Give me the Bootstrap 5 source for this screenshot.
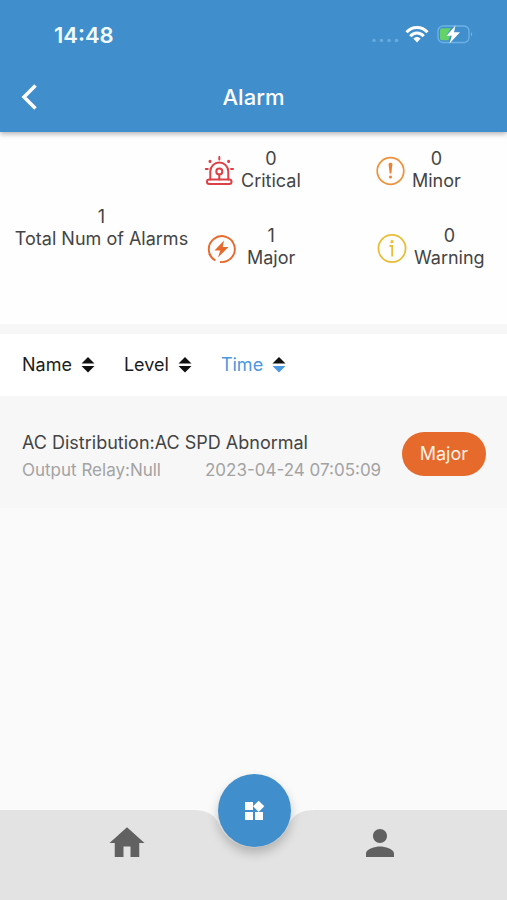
<!DOCTYPE html>
<html lang="en">
<head>
<meta charset="utf-8">
<meta name="viewport" content="width=device-width, initial-scale=1">
<title>Alarm</title>
<link rel="stylesheet" href="https://cdn.jsdelivr.net/npm/bootstrap@5.3.0/dist/css/bootstrap.min.css">
<style>
  body { font-family: Inter, "Liberation Sans", sans-serif; font-size: 18px; line-height: 22px; color: #444; background: #fafafa; }
  svg { display: block; flex-shrink: 0; }
  .app-header { background: #408ecc; color: #fff; box-shadow: 0 2px 5px rgba(0,0,0,.3); z-index: 2; }
  .status-bar { height: 68px; padding: 2px 34px 0 54px; font-size: 22px; font-weight: 600; color: #f0faff; }
  .title-bar { height: 64px; padding: 0 16px 6px; display: grid; grid-template-columns: 44px 1fr 44px; }
  .title-bar h1 { font-size: 22px; line-height: 28px; font-weight: 500; }
  .summary { display: grid; grid-template-columns: 203fr 171fr 133fr; row-gap: 33px; padding: 16px 0 55px; background: #fefefe; }
  .total { grid-row: 1 / 3; padding-top: 38px; }
  .level-cell { gap: 2px; }
  .divider { height: 10px; background: #f7f7f7; }
  .sort-bar { height: 62px; padding: 0 22px; gap: 29px; background: #fff; }
  .sort-bar button { gap: 9px; color: #1c1c1c; }
  .sort-bar button.current { color: #4a97e2; }
  .alarm-item { background: #f7f7f7; height: 112px; padding: 4px 21px 0 22px; }
  .alarm-meta { font-size: 17px; color: #a3a3a3; gap: 44px; margin-top: 5px; }
  .level-pill { background: #e66a2c; color: #fff2e6; border-radius: 22px; padding: 11px 18px; }
  .bottom-nav { height: 90px; }
  .nav-shape { height: 90px; }
  .side { background: #e3e3e3; }
  .nav-links { inset: 0; padding-top: 12px; color: #616161; }
  .fab { width: 73px; height: 73px; top: -36px; left: 50%; margin-left: -36px; background: #408ecc; color: #fff; box-shadow: 0 6px 11px rgba(0,0,0,.22); }
</style>
</head>
<body class="d-flex flex-column min-vh-100">
<header class="app-header position-relative">
  <div class="status-bar d-flex align-items-center justify-content-between">
    <span>14:48</span>
    <svg width="104" height="24" viewBox="0 0 104 24" aria-hidden="true">
      <g fill="#66abdf"><circle cx="5" cy="17.500" r="1.800"/><circle cx="12.500" cy="17.500" r="1.800"/><circle cx="20" cy="17.500" r="1.800"/><circle cx="27.500" cy="17.500" r="1.800"/></g>
      <g fill="none" stroke="#fff" stroke-width="3"><path d="M37.500 9.300C43.200 3 52.800 3 58.500 9.300"/><path d="M41.300 13.200C45 9 51 9 54.700 13.200"/></g>
      <path d="M44.300 15.600c2.200-2.100 5.200-2.100 7.400 0L48 19.500z" fill="#fff"/>
      <rect x="69" y="3" width="31" height="16.500" rx="5" fill="none" stroke="#6db2e6" stroke-width="1.300"/>
      <path d="M102 9.300c1.600.600 1.600 3.400 0 4z" fill="#70b5e9"/>
      <path d="M73 5.300H82l-4.500 7h4l-2 5H73a2 2 0 0 1-2-2v-8a2 2 0 0 1 2-2z" fill="#64d269"/>
      <path d="M86.500 2.500L77.500 12.700h5.300L80.500 20.500l10.500-11.300h-6z" fill="#fff"/>
    </svg>
  </div>
  <div class="title-bar align-items-center">
    <button type="button" class="btn p-0 border-0 text-white" aria-label="Back">
      <svg width="28" height="28" viewBox="0 0 28 28" fill="none" stroke="currentColor" stroke-width="3.500"><path d="M19.500 2.500L8 14l11.500 11.500"/></svg>
    </button>
    <h1 class="text-center m-0">Alarm</h1>
  </div>
</header>

<main class="flex-grow-1">
  <section class="summary" aria-label="Alarm totals">
    <div class="total d-flex flex-column justify-content-center text-center"><span>1</span><span>Total Num of Alarms</span></div>
    <div class="level-cell d-flex align-items-center">
      <svg width="36" height="36" viewBox="0 0 36 36" fill="none" stroke="#dc4046" stroke-width="2" stroke-linecap="round" aria-hidden="true">
        <path d="M7.300 27.500v-8a9 9 0 0 1 18 0v8"/><rect x="4" y="27.500" width="24.500" height="4.500" rx="2.200"/>
        <circle cx="16.300" cy="19.500" r="3"/><path d="M16.300 22.500v5M16.300 5v2.500M2.800 17h2M28 17h2"/>
        <path d="M7 9.300v.1M25.600 9.300v.1" stroke-width="3"/>
      </svg>
      <div class="text-center">0<br>Critical</div>
    </div>
    <div class="level-cell d-flex align-items-center">
      <svg width="36" height="36" viewBox="0 0 36 36" aria-hidden="true">
        <circle cx="16.500" cy="19" r="13.300" fill="none" stroke="#ed913a" stroke-width="1.700"/>
        <path d="M14.600 12.500c0-2.400 3.800-2.400 3.800 0L17.300 21.500h-1.600z" fill="#ed8130"/><circle cx="16.500" cy="25" r="1.500" fill="#ed8130"/>
      </svg>
      <div class="text-center">0<br>Minor</div>
    </div>
    <div class="level-cell d-flex align-items-center ps-1">
      <svg width="38" height="36" viewBox="0 0 38 36" aria-hidden="true">
        <path d="M8.500 31.500A13 13 0 1 1 13 33M2 24.500c1 2 1.800 3.200 3.200 4.500" fill="none" stroke="#e66a2c" stroke-width="1.900"/>
        <path d="M17 11.500L7.500 21.500h5.800L11 28.500l10.500-10.500h-5.800z" fill="#e66a2c"/>
      </svg>
      <div class="text-center">1<br>Major</div>
    </div>
    <div class="level-cell d-flex align-items-center">
      <svg width="38" height="36" viewBox="0 0 38 36" fill="none" stroke="#e9bd35" stroke-width="1.800" aria-hidden="true">
        <circle cx="18" cy="19.500" r="13.600"/><path d="M15.500 17h2.700v10.500"/><circle cx="18" cy="12.700" r="1.600" fill="#e9bd35" stroke="none"/>
      </svg>
      <div class="text-center">0<br>Warning</div>
    </div>
  </section>
  <div class="divider"></div>

  <section class="sort-bar d-flex align-items-center" aria-label="Sort alarms">
    <button type="button" class="border-0 bg-transparent p-0 d-flex align-items-center">Name
      <svg width="14" height="18" viewBox="0 0 14 18" fill="#111"><path d="M.5 7.500L7 1l6.500 6.500zM.5 10L7 16.500 13.500 10z"/></svg></button>
    <button type="button" class="border-0 bg-transparent p-0 d-flex align-items-center">Level
      <svg width="14" height="18" viewBox="0 0 14 18" fill="#111"><path d="M.5 7.500L7 1l6.500 6.500zM.5 10L7 16.500 13.500 10z"/></svg></button>
    <button type="button" class="current border-0 bg-transparent p-0 d-flex align-items-center">Time
      <svg width="14" height="18" viewBox="0 0 14 18" fill="#111"><path d="M.5 7.500L7 1l6.500 6.500z"/><path d="M.5 10L7 16.500 13.500 10z" fill="#4a97e2"/></svg></button>
  </section>

  <article class="alarm-item d-flex align-items-center justify-content-between">
    <div class="pt-1">
      <div>AC Distribution:AC SPD Abnormal</div>
      <div class="alarm-meta d-flex"><span>Output Relay:Null</span><time>2023-04-24 07:05:09</time></div>
    </div>
    <span class="level-pill">Major</span>
  </article>
</main>

<nav class="bottom-nav position-relative" aria-label="Main">
  <div class="nav-shape d-flex">
    <div class="side flex-fill"></div>
    <svg width="122" height="90" viewBox="0 0 122 90" fill="#e3e3e3" aria-hidden="true"><path d="M0 0C14 0 20 4 25 12C38 46 84 46 97 12C102 4 108 0 122 0V90H0z"/></svg>
    <div class="side flex-fill"></div>
  </div>
  <div class="nav-links position-absolute d-flex align-items-start">
    <a href="#" class="w-50 d-flex justify-content-center text-reset" aria-label="Home"><svg width="42" height="42" viewBox="0 0 24 24" fill="currentColor"><path d="M10 20v-6h4v6h5v-8h3L12 3 2 12h3v8z"/></svg></a>
    <a href="#" class="w-50 d-flex justify-content-center text-reset" aria-label="Profile"><svg width="42" height="42" viewBox="0 0 24 24" fill="currentColor"><path d="M12 12c2.210 0 4-1.790 4-4s-1.790-4-4-4-4 1.790-4 4 1.790 4 4 4zm0 2c-2.670 0-8 1.340-8 4v2h16v-2c0-2.660-5.330-4-8-4z"/></svg></a>
  </div>
  <button type="button" class="fab position-absolute rounded-circle border-0 p-0 d-flex align-items-center justify-content-center" aria-label="Menu">
    <svg width="24" height="24" viewBox="0 0 24 24" fill="currentColor"><path d="M13 13v8h8v-8h-8zM3 21h8v-8H3v8zM3 3v8h8V3H3zm13.660-1.310L11 7.340 16.660 13l5.660-5.660-5.660-5.650z"/></svg>
  </button>
</nav>
<script src="https://cdn.jsdelivr.net/npm/bootstrap@5.3.0/dist/js/bootstrap.bundle.min.js"></script>
</body>
</html>
